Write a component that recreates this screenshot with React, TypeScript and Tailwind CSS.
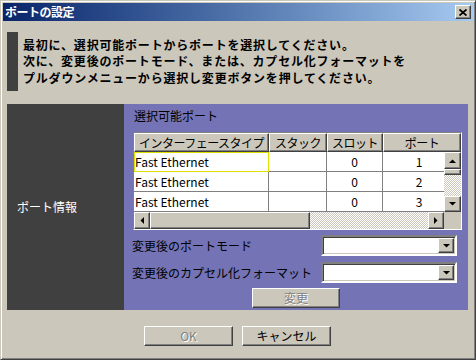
const jp = "font-['MS_UI_Gothic','Noto_Sans_CJK_JP',sans-serif]";

const raised =
  "border border-t-white border-l-white border-r-[#404040] border-b-[#404040] shadow-[inset_-1px_-1px_0_#808080] bg-[#cbc7bb]";

const checker =
  "bg-[image:repeating-conic-gradient(#cbc7bb_0%_25%,#ffffff_0%_50%)] bg-[length:2px_2px]";

const Tri = ({ dir }: { dir: "up" | "down" | "left" | "right" }) => {
  const pts = {
    up: "0,4 7,4 3.5,0.5",
    down: "0,0 7,0 3.5,3.5",
    left: "4,0 4,7 0.5,3.5",
    right: "0,0 0,7 3.5,3.5",
  }[dir];
  const vert = dir === "up" || dir === "down";
  return (
    <svg width={vert ? 7 : 4} height={vert ? 4 : 7} viewBox={vert ? "0 0 7 4" : "0 0 4 7"}>
      <polygon points={pts} fill="#000" />
    </svg>
  );
};

const ArrowBtn = ({ dir, className = "" }: { dir: "up" | "down" | "left" | "right"; className?: string }) => (
  <div className={`${raised} flex items-center justify-center ${className}`}>
    <Tri dir={dir} />
  </div>
);

const Dropdown = () => (
  <div className="w-[136px] h-[21px] border-2 border-t-[#808080] border-l-[#808080] border-r-white border-b-white shadow-[inset_1px_1px_0_#404040,inset_-1px_-1px_0_#cbc7bb] bg-white flex justify-end p-px">
    <ArrowBtn dir="down" className="w-[16px] h-full" />
  </div>
);

const rows = [
  { name: "Fast Ethernet", stack: "", slot: "0", port: "1" },
  { name: "Fast Ethernet", stack: "", slot: "0", port: "2" },
  { name: "Fast Ethernet", stack: "", slot: "0", port: "3" },
];

const PortTable = () => (
  <div className="ml-px w-[329px] h-[98px] border border-t-[#808080] border-l-[#808080] border-r-white border-b-white bg-[#cbc7bb] flex flex-col">
    {/* header */}
    <div className="flex h-[19px] text-[12px] tracking-[-0.5px] leading-[17px] text-black">
      <div className={`${raised} w-[135px] text-center`}>インターフェースタイプ</div>
      <div className={`${raised} w-[58px] text-center`}>スタック</div>
      <div className={`${raised} w-[56px] text-center`}>スロット</div>
      <div className={`${raised} flex-1 text-center`}>ポート</div>
    </div>
    <div className="flex h-[60px]">
      <div className="flex flex-col w-[310px]">
        {rows.map((r, i) => (
          <div key={i} className="flex h-[20px] bg-white text-[12px] leading-[19px]">
            <div
              className={`w-[135px] border-r border-b border-[#808080] pl-px ${
                i === 0 ? "outline outline-1 -outline-offset-1 outline-[#e0e000]" : ""
              }`}
            >
              {r.name}
            </div>
            <div className="w-[58px] border-r border-b border-[#808080]">{r.stack}</div>
            <div className="w-[56px] border-r border-b border-[#808080] text-center">{r.slot}</div>
            <div className="flex-1 border-b border-[#808080] text-center pl-[11px]">{r.port}</div>
          </div>
        ))}
      </div>
      <div className={`w-[17px] flex flex-col ${checker}`}>
        <ArrowBtn dir="up" className="h-[17px]" />
        <div className={`${raised} h-[6px]`} />
        <div className="flex-1" />
        <ArrowBtn dir="down" className="h-[16px]" />
      </div>
    </div>
    <div className="flex h-[17px]">
      <div className={`flex w-[310px] ${checker}`}>
        <ArrowBtn dir="left" className="w-[16px]" />
        <div className={`${raised} w-[160px]`} />
        <div className="flex-1" />
        <ArrowBtn dir="right" className="w-[16px]" />
      </div>
      <div className="flex-1 bg-[#cbc7bb]" />
    </div>
  </div>
);

export default function App() {
  return (
    <div
      className={`${jp} w-[476px] h-[360px] bg-[#cbc7bb] border border-t-[#cbc7bb] border-l-[#cbc7bb] border-r-[#404040] border-b-[#404040] shadow-[inset_1px_1px_0_#ffffff,inset_-1px_-1px_0_#808080] p-[2px] flex flex-col text-black`}
    >
      {/* title bar */}
      <div className="h-[18px] bg-linear-to-r from-[#0a246a] to-[#a6caf0] flex items-center justify-between pl-[2px] pr-[2px]">
        <span className="text-white font-bold text-[12px] tracking-[-0.5px] leading-[18px]">ポートの設定</span>
        <div className={`${raised} w-[16px] h-[14px] flex items-center justify-center`}>
          <svg width="8" height="7" viewBox="0 0 8 7">
            <path d="M0.5 0.5 L7.5 6.5 M7.5 0.5 L0.5 6.5" stroke="#000" strokeWidth="1.8" />
          </svg>
        </div>
      </div>

      <div className="flex-1 flex flex-col pl-[4px] pr-[5px]">
        {/* instructions */}
        <div className="mt-[11px] h-[59px] flex">
          <div className="w-[11px] bg-[#404040]" />
          <div className="pl-[5px] flex flex-col justify-center font-bold text-[12px] tracking-[0.8px] leading-[16.5px]">
            <p>最初に、選択可能ポートからポートを選択してください。</p>
            <p>次に、変更後のポートモード、または、カプセル化フォーマットを</p>
            <p>プルダウンメニューから選択し変更ボタンを押してください。</p>
          </div>
        </div>

        {/* main panel */}
        <div className="mt-[13px] h-[206px] flex">
          <div className="w-[117px] bg-[#404040] flex items-center pl-[10px] text-white text-[12px] leading-[14px]">
            ポート情報
          </div>
          <div className="flex-1 bg-[#7373b5] pl-[8px] pr-[6px] pt-[5px] flex flex-col text-[12px]">
            <div className="leading-[14px] pl-[2px]">選択可能ポート</div>
            <div className="mt-[9px]">
              <PortTable />
            </div>
            <div className="mt-[5px] flex items-center justify-between mr-[5px]">
              <span className="leading-[14px]">変更後のポートモード</span>
              <Dropdown />
            </div>
            <div className="mt-[6px] flex items-center justify-between mr-[5px]">
              <span className="leading-[14px]">変更後のカプセル化フォーマット</span>
              <Dropdown />
            </div>
            <div className="mt-[5px] flex justify-center pr-[2px]">
              <button
                className={`${raised} w-[88px] h-[20px] text-[12px] leading-[16px] text-[#808080] [text-shadow:1px_1px_0_#ffffff]`}
              >
                変更
              </button>
            </div>
          </div>
        </div>

        {/* bottom buttons */}
        <div className="mt-[16px] flex justify-center gap-[9px]">
          <button
            className={`${raised} w-[89px] h-[20px] text-[12px] leading-[16px] text-[#808080] [text-shadow:1px_1px_0_#ffffff]`}
          >
            OK
          </button>
          <button className={`${raised} w-[89px] h-[20px] text-[12px] leading-[16px]`}>キャンセル</button>
        </div>
      </div>
    </div>
  );
}
